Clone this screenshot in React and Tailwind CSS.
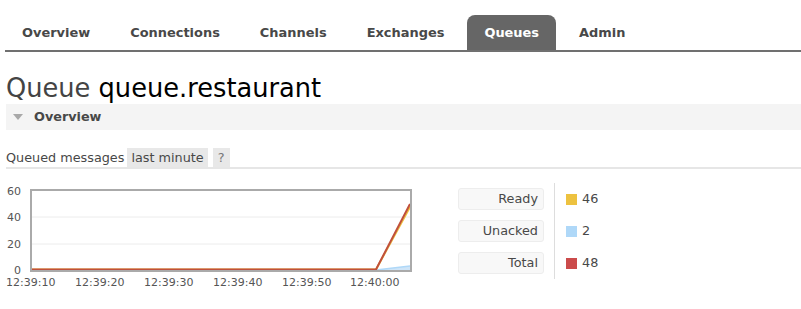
const tabs = ['Overview', 'Connections', 'Channels', 'Exchanges', 'Queues', 'Admin']

function Chart() {
  const xs = ['12:39:10', '12:39:20', '12:39:30', '12:39:40', '12:39:50', '12:40:00']
  const xPos = [0, 69, 138, 207, 276, 344]
  return (
    <svg width="420" height="108" viewBox="0 0 420 108" className="shrink-0">
      {/* grid */}
      <line x1="26" y1="33" x2="404" y2="33" stroke="#ececec" strokeWidth="1" />
      <line x1="26" y1="60" x2="404" y2="60" stroke="#ececec" strokeWidth="1" />
      {/* unacked area */}
      <polygon points="370,86 404,82 404,86" fill="#cfe5f8" />
      <polyline points="370,86 404,82" fill="none" stroke="#afd8f8" strokeWidth="1.5" />
      {/* ready */}
      <polyline points="26,85.5 370,85.5 404,23" fill="none" stroke="#edc240" strokeWidth="2" />
      {/* total */}
      <polyline points="26,85.5 370,85.5 404,20" fill="none" stroke="#c0503c" strokeWidth="2" />
      {/* frame */}
      <rect x="25" y="6" width="380" height="81" fill="none" stroke="#aaaaaa" strokeWidth="2" />
      <g fontFamily="'DejaVu Sans', Verdana, sans-serif" fontSize="11" fill="#555">
        <text x="15" y="11" textAnchor="end">60</text>
        <text x="15" y="37" textAnchor="end">40</text>
        <text x="15" y="64" textAnchor="end">20</text>
        <text x="15" y="90" textAnchor="end">0</text>
        {xs.map((t, i) => (
          <text key={t} x={xPos[i]} y="102">{t}</text>
        ))}
      </g>
    </svg>
  )
}

function App() {
  const legend = [
    { label: 'Ready', color: 'bg-[#edc240]', value: '46' },
    { label: 'Unacked', color: 'bg-[#afd8f8]', value: '2' },
    { label: 'Total', color: 'bg-[#cb4b4b]', value: '48' },
  ]

  return (
    <div className="w-[801px] h-[309px] bg-white overflow-hidden pl-[6px] text-[#484848] font-['DejaVu_Sans',Verdana,sans-serif]">
      {/* Tabs */}
      <nav className="pt-[15px] flex gap-[6px] border-b-2 border-[#707070] -ml-px">
        {tabs.map((t) => (
          <div
            key={t}
            className={
              t === 'Queues'
                ? 'h-[35px] px-[17px] flex items-center text-[12.95px] font-bold bg-[#666] text-white rounded-t-[8px]'
                : 'h-[35px] px-[17px] flex items-center text-[12.95px] font-bold text-[#484848]'
            }
          >
            {t}
          </div>
        ))}
      </nav>

      {/* Title */}
      <h1 className="mt-[20px] text-[25.7px] leading-[32px] text-[#444]">
        Queue <span className="text-black">queue.restaurant</span>
      </h1>

      {/* Section header */}
      <div className="h-[26px] bg-[#f4f4f4] flex items-center pl-[7px]">
        <svg width="10" height="6" viewBox="0 0 10 6" className="mr-[11px]">
          <polygon points="0,0 10,0 5,6" fill="#a8a8a8" />
        </svg>
        <span className="text-[12.8px] font-bold text-[#484848]">Overview</span>
      </div>

      {/* Queued messages */}
      <div className="mt-[18px] flex items-end border-b-2 border-[#e6e6e6] h-[21px]">
        <span className="text-[12.8px] leading-[19px] mr-[3px]">Queued messages</span>
        <span className="text-[12.8px] leading-[19px] bg-[#e8e8e8] px-[4px]">last minute</span>
        <span className="text-[12.8px] leading-[19px] bg-[#e8e8e8] px-[5px] ml-[5px] text-[#777]">?</span>
      </div>

      {/* Chart + legend */}
      <div className="mt-[14px] flex items-start">
        <div className="mt-px">
          <Chart />
        </div>
        <div className="ml-[32px] flex">
          <div className="flex flex-col gap-[10px] pt-[5px]">
            {legend.map((l) => (
              <div
                key={l.label}
                className="w-[86px] h-[22px] bg-[#f8f8f8] border border-[#ededed] rounded-[3px] flex items-center justify-end pr-[5px] text-[12.8px]"
              >
                {l.label}
              </div>
            ))}
          </div>
          <div className="w-px h-[96px] bg-[#dddddd] ml-[10px]" />
          <div className="flex flex-col gap-[10px] pt-[5px] pl-[11px]">
            {legend.map((l) => (
              <div key={l.label} className="h-[22px] flex items-center text-[12.8px]">
                <span className={'w-[11px] h-[11px] mr-[5px] ' + l.color} />
                {l.value}
              </div>
            ))}
          </div>
        </div>
      </div>
    </div>
  )
}

export default App
